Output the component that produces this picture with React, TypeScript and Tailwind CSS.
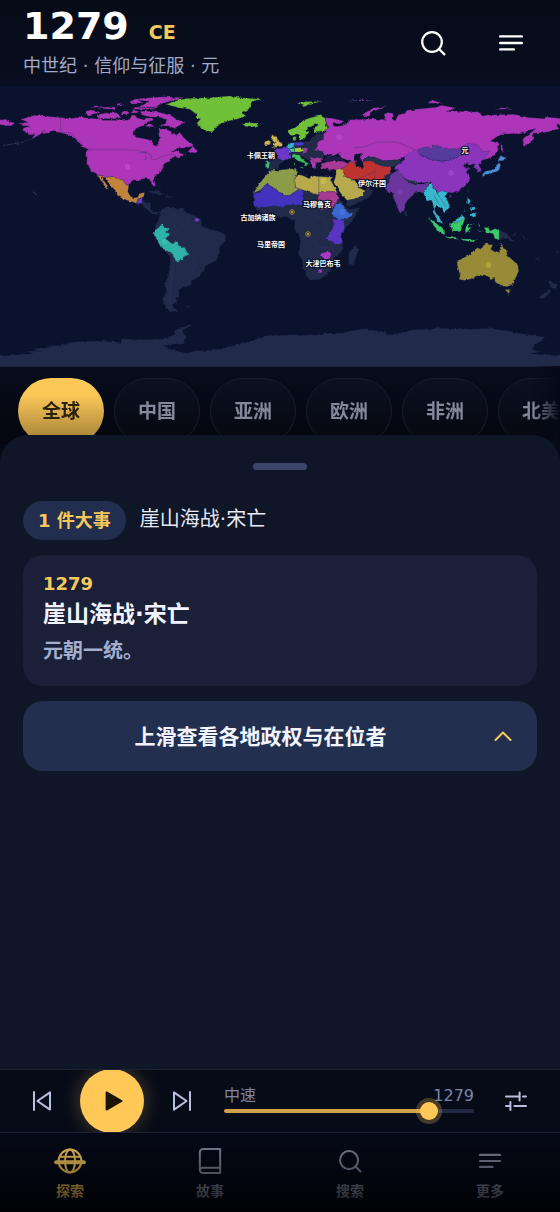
import { useState } from "react";
import { clsx } from "clsx";

type Land = { fill: string; d: string };

const DARK = "#232c49";
const PINK = "#ad34b7";
const GREEN = "#70c137";

// Paths are written in degrees (lon lat), the map group flips and scales them.
const lands: Land[] = [
  // Antarctica
  { fill: DARK, d: "M-184 -84 -164 -82.6 -158 -82 -162 -80.5 -154 -80.3 -158 -79 -148 -78.3 -150 -77.4 -142 -77 -135 -75 -125 -74.2 -115 -74 -102 -75 -102 -72.6 -85 -73.2 -75 -73 -68 -70 -67 -67 -62 -65 -57 -63 -57 -64 -63 -67 -61 -71 -62 -75 -75 -77 -72 -79 -60 -82 -55 -80.5 -45 -80 -40 -79 -35 -78.5 -28 -76.2 -20 -74.5 -14 -72.5 -8 -70.5 8 -70 22 -70.4 32 -69 40 -69 45 -67.6 55 -66 62 -67.5 68 -68 69 -71 72 -69.5 78 -69 85 -66.8 96 -66.6 102 -65.8 112 -66.2 122 -66.4 135 -66 145 -67.3 156 -69.5 170 -71.6 168 -74 163 -76.5 162 -79 166 -81 160 -82.2 184 -84 184 -94 -184 -94z" },
  // Americas
  { fill: PINK, d: "M-168 65.6 -164 66.5 -162 66.5 -166 68.5 -162 70 -157 71.3 -150 70.5 -141 69.7 -135 69 -128 70.2 -124 69.5 -118 69 -114 68 -108 68 -102 67.8 -97 68.2 -95 71.5 -92 71 -92 69.5 -88 68.5 -86 69.5 -82 69.5 -81.5 68 -86 66.5 -87 64.8 -92 63 -94.5 60.5 -94.5 58.8 -92.5 57 -88 56.3 -82.3 55.2 -82 53 -80 51.3 -79 52 -78.8 54.5 -76.7 57 -78 58.8 -77.5 61 -78 62.4 -74 62.3 -70 61 -69.5 59 -66 58.8 -64.5 60.3 -62 57 -60 55.2 -56 52.5 -56 51.5 -60 50.2 -66 50 -70 47 -65 49.2 -64.5 47 -61 45.7 -65.5 43.5 -66.5 45 -70 43.7 -70.7 42 -70 41.7 -74 40.6 -75.5 38 -76 36.8 -75.6 35.3 -78 33.9 -81 32 -81.3 30 -80 27 -80.4 25.2 -81.8 26 -82.7 28 -84 30 -86 30.3 -89.5 30.2 -89.2 29.2 -91.5 29.5 -94 29.6 -97 27.8 -97.2 26 -99.2 26.5 -101 29.7 -103 29 -104.6 29.7 -106.5 31.8 -111 31.3 -114.8 32.5 -117.1 32.5 -118.5 34 -120.6 34.6 -122.4 37.5 -124.3 40.3 -124 44 -124.6 48.3 -122.8 49 -127 51 -130 54.5 -133 57.5 -137 58.8 -141 60 -146 60.8 -149 60 -152 59.2 -153 61 -150.5 61.2 -154 59 -158 56.8 -163 54.8 -165 54.4 -160 56 -157.5 58.6 -162 58.7 -162 60 -165.5 61.5 -165 63 -161 64.3 -166 64.5z" },
  { fill: PINK, d: "M-90 73.7 -86 73.8 -80 73.7 -76 72.7 -70 71 -67 69 -61.5 66.6 -64 65 -67.5 63 -65.5 62 -72 64.3 -78 64.5 -73.5 66 -73 68.3 -78 70 -84 70 -89 71.5zM-117 69 -105 69 -102 70 -105 72.8 -110 73 -118 71.5zM-125.5 72 -123 71.2 -116 73 -121 74.5 -124.5 74zM-91 76.5 -80 76.2 -78 77.8 -73 79.5 -62 82.4 -75 83.1 -90 82 -92 81 -84 80 -88 78zM-95 75 -80 75 -81 75.7 -92 76.5zM-96 79 -88 79 -92 81.3 -97 80zM-117 75.5 -106 75 -106 76.5 -115 76.3zM-102 72 -97 72 -98 74 -102 73.5zM-95.5 72.5 -90 73 -92 74.1 -95 74zM-87 64 -80 63.7 -84 65.8zM-59.3 47.7 -53 46.7 -53.5 48.5 -56 51.5 -58 49zM-122 76 -116 76.5 -118 77.4zM-105 77.5 -100 78 -104 79zM-184 69 -175 67.5 -170 66 -173 64.3 -184 65.5z" },
  { fill: "#c2843b", d: "M-117.1 32.5 -114.8 32.5 -111 31.3 -106.5 31.8 -104.6 29.7 -101 29.7 -99 26.5 -97.2 26 -97.8 22 -96 19 -94 18.2 -91.5 18.5 -90.3 21 -87 21.5 -88 18.3 -91 17.5 -92.3 14.6 -96 15.8 -101.5 17.7 -105.5 20.3 -105.5 22.5 -109 26 -112.8 31 -114.8 31.7 -111 26 -109.5 23 -112 24.7 -114.5 28z" },
  { fill: DARK, d: "M-90 13.9 -88.5 15.8 -83.3 15 -83.6 11 -81 9 -77.4 8.6 -79 7.5 -83 8.3 -86 11.5zM-84.8 22 -80 23 -74.3 20.3 -77.5 20zM-74 18.4 -72.5 19.8 -68.5 18.6zM-78 26 -77 24.5 -76.5 25z" },
  { fill: "#6340c4", d: "M-91 17.5 -88.5 18.2 -88.5 15.8 -90 13.9 -92.3 14.6z" },
  { fill: DARK, d: "M-77.4 8.6 -75 11 -71.7 12.4 -70 11.5 -62 10.7 -60 8.5 -54 6 -51 4.5 -50 0 -44 -2.8 -39 -3.5 -35 -6 -35 -9 -39 -13.5 -39.2 -18 -41 -22 -48 -25.5 -49 -29 -53 -33.5 -57 -35 -57 -38 -62 -39 -65 -41 -65 -45 -67.5 -46.5 -66 -48 -69 -51 -68.5 -52.5 -65.3 -54.8 -70 -55 -74.5 -51 -75.5 -47 -73 -42 -73.5 -37 -71.5 -31 -70.3 -20 -76 -14 -81 -6 -80 -2.5 -80 1 -77.5 4z" },
  { fill: "#2fb2a6", d: "M-81 -5 -80.5 -2.5 -78 -1 -76 1.5 -74.5 -0.5 -71 -2 -73 -4 -70.5 -5 -73.5 -8 -70 -11 -67 -10 -65 -12.5 -61 -14 -60.5 -16.5 -58 -18 -62 -20 -63 -22 -67 -22.8 -69 -18 -76.5 -14z" },
  { fill: "#7a3fc8", d: "M-54.5 5.5 -51.5 4.2 -53 2.5 -54.5 3z" },
  { fill: DARK, d: "M-61 -51.7 -58 -51.4 -58.5 -52.2z" },
  { fill: GREEN, d: "M-73 78.2 -66 76 -58 75 -54 72 -54 69.5 -51 69 -53.5 66 -51 63.5 -48 61 -44 59.8 -42 62 -40 65 -33 67.5 -24 69.8 -22 71 -25 73 -20 75 -19 78 -18 80 -12 81.5 -25 82.5 -33 83.6 -45 82.5 -60 82 -67 80.5zM-24.3 65.5 -22 64 -19 63.4 -14 64.5 -15 66.2 -22 66.4z" },
  // Europe
  { fill: DARK, d: "M8 54 14 54 19 54.5 21 57 24 59.4 28 59.4 31 56 34 52 30 46 28 45.2 28 43.7 26 41 23 40.5 23 37 21.5 37.5 19.5 41.5 14 45.3 12.3 45 8 44 6.5 46.5 4 50 5 53.3z" },
  { fill: DARK, d: "M-9.2 43.2 -1.7 43.4 3.2 42.3 -0.3 39.5 -2 36.8 -5.5 36 -9 37z" },
  { fill: "#33c279", d: "M-8.8 41.8 -6.5 41.8 -7 38 -7.5 37.1 -9 37 -9.4 38.8z" },
  { fill: "#6d38ca", d: "M-4.5 48.4 -1.3 46 -1.7 43.4 3 42.4 7.4 43.7 6.5 46.5 8 48.9 2.5 51 1.5 50 -1.5 49.6z" },
  { fill: "#d0b84c", d: "M-5.5 50.1 1.3 51.2 1.7 52.7 -1.5 55 -2 57.5 -4 57.6 -3.2 58.6 -5 58.6 -6 56.5 -4.8 54.8 -3 54 -4.5 53.2 -4.8 52 -3 51.4zM-10 52 -6.4 52.3 -6 54.5 -8 55.2 -10 54z" },
  { fill: GREEN, d: "M5 61.5 5.5 58.8 8 58 10.5 59.2 11.3 59 12.8 55.5 14.3 55.6 16.5 57 17 58.7 18.8 60 17.2 61 18 63 21.5 64.5 22.2 65.8 25.2 65.2 21.5 63 21.3 60.9 23 59.9 28 60.5 31 62.5 30 64.5 29.5 67 29 69.5 26 71 20 69.8 15 68 12 65 10 63.5zM8.2 57 8.3 55 10 55 10.5 57.5zM11 79 16 76.8 19 78.5 27 80 18 80z" },
  { fill: "#35b8c4", d: "M4 51 7 53.4 9.5 53.5 9 51 6 49.5z" },
  { fill: "#4d38d6", d: "M9.5 53.5 14 54 16 52.5 12 51.5 9 52z" },
  { fill: "#9fd13a", d: "M9 50 13 50.5 16 48.6 13 47.5 9.5 47.6z" },
  { fill: "#38cfa0", d: "M6 49.5 9 50 9.5 47.6 7 47.5z" },
  { fill: "#b03cb4", d: "M13 51 18 50 17 47.3 14 46.5 16 48.6zM19.5 44 22.5 44 23 40.5 23 37 21.5 37.5 19.5 41.5z" },
  { fill: "#3fc35c", d: "M7.5 44 8 46 12.3 45.7 13.5 43.6 18.3 40 16.5 38.3 15.8 40 12 42 9.5 44zM12.5 38 15.5 38 15 36.8zM8.5 41 9.7 41 9.5 39z" },
  { fill: "#a93897", d: "M26.3 40 30 41.2 35 42 41.5 41.4 44.5 39.8 44 37.3 36 36 30.5 36.5 27 37zM20 43 24 43.8 28 43.5 26 41 22 40.6z" },
  // Asia
  { fill: PINK, d: "M28 59.8 30 60 28.5 61.5 31 63 29.5 67 29 69.6 33 69.4 41 67.5 40 66 35 66.5 34.5 64.5 37.5 63.9 40 64.6 44 66 44 68.3 54 68.4 60 69 68 68.5 67 71 69 72.9 73 72.5 72 69 74 67.5 76 71.5 80.5 72.5 81 73.6 87 75 100 76.3 104 77.6 113 75.8 107 73.5 113 73.7 127 73.4 131 71 139 71.5 150 71.8 160 69.7 170 69 171 70 184 68.9 184 65 177.5 64.7 179.5 62.5 170 60 163.5 59.8 162 58 163.3 56 160 53.3 156.8 51 156 56 161 60 164.5 62.5 160 61.5 155 59.3 142 59.2 135.5 54.7 141 53 140 48 135 43.5 131 42.6 120 44 87 46 80 45 75 42.5 70 42 66 42 61 44 56 45 53 42 51 44.5 53 46.8 48 46 47.5 43 49 41.5 46.5 41 40 43.5 37 46.8 39 47.2 34 45 32.5 46.2 29 45.4 27 48 22 48.5 24 51 24 54 28 56zM52 71 57 70.6 58 73 68 76.8 60 75.8zM95 79 105 78.5 98 81zM138 75 150 75 143 76zM142 54 143.5 50 142.5 46.3 142 50zM45 80.3 60 80.5 52 81.2z" },
  { fill: "#27304c", d: "M53 42 56 45 61 44 66 42 70 42 75 42.5 80 42.5 74 38.5 66 36.5 58 38z" },
  { fill: "#b7aa4d", d: "M34.5 28 36 33 36 36.5 42 37 41 34.5 42 32 46 29.5 48 29.5 50 26.5 51.6 24.2 55 22.5 52 19 47 17 43 16.5 39 21z" },
  { fill: DARK, d: "M43 16.5 47 17 52 19 55 22.5 56 26 59.8 22.5 57 18.5 52 15.5 45 12.8 43.3 12.8zM61.5 25.2 66 30 70.5 34 74.5 33 70 28 67 25z" },
  { fill: "#bf3131", d: "M39 37.5 42 38.5 44.5 41 48.5 41.5 49 38 54 37 53 41.5 58 42 66 38.5 71 38 70.5 34 66 30 61.5 25.2 57 26.8 52 27.5 50 30 48 30 46 29.5 42 32 41 34.5z" },
  { fill: "#6a369d", d: "M68 23.7 67 25 70 28 71 33 75 35.5 78 35 79 31.5 81 30.2 88 27 92 27 96.5 28.5 94 24 92.3 21 90 22 87 21.3 82 16.6 80.2 13.5 80 10.3 77.5 8 76 10.5 74.5 14 72.8 19 72.5 21.3 70 21z" },
  { fill: "#8b35bd", d: "M75 39 80 42.5 80 45 87 49 91 45 97 42.7 105 41.7 112 43.6 119.5 46.7 116 49.8 120 53 126 52.5 131 47.8 135 48.3 131 42.8 130 42.4 129.7 41 127.5 39.6 129.4 36.5 129 35 126.4 34.5 126.8 37 125 38 124.5 40 121.5 39 121 40.8 118 39 119 37.2 122.5 37.2 119.3 35 122 31.5 121.8 29 119 25.5 115 22.7 110.5 21.2 108 21.7 102 21.5 98.5 25 97 28.5 92 27.8 88.8 27.8 84 28.8 81 30.3 78.7 32 76 35.5 73 37zM108.7 19.5 110.8 20 109.5 18.2z" },
  { fill: "#573a9c", d: "M88 49 93 50.7 98 50.5 98 52 102 51.5 108 49.5 116 49.8 119.5 46.7 112 43.6 105 41.7 97 42.7 91 45z" },
  { fill: DARK, d: "M80 30.3 88 27.9 88 26.7 84 27.2zM80 9.5 81.8 7.5 80.5 6zM120.3 23 121.8 25 120.9 22z" },
  { fill: "#37b8cc", d: "M92.3 21 94.5 25 97.5 28 98.5 25 101.5 21.5 104 22.6 108 21.6 106 19 109 14 108.8 11.5 105 8.7 104.8 10.4 102.5 12 100.8 13.5 99.3 11 100.3 8 102.5 6 104 1.4 101 3 100 6.5 98.3 8.5 98.7 12 97.5 16.5 94.3 16zM120.5 18.5 122 18 121.5 14.5 124 13 120.5 14.5zM122 7 124 8.5 126.5 8 125.5 9.7 126 6 124 6zM122 11.5 125 12.5 125 10 123 9.5zM117.3 8.5 119.3 11 118.5 10.5z" },
  { fill: "#4a8fd6", d: "M130.5 31.3 132 33 135.5 33.6 139 34.9 140.8 35.8 141.9 39.6 141.2 41.3 140 40 138.5 37.3 136 36 132 35.2 130 33.3zM140 42 143.3 42 145.4 43.5 141.8 45.4z" },
  { fill: "#39cb68", d: "M109.3 1.8 111 1.6 115 5 117 7 119 5 117.5 1 116 -3.8 111 -3.2 110 -1zM95.3 5.5 98 4 103.5 -1 106 -3.2 105.8 -5.8 102.5 -4 99 0zM105.2 -6.7 110.5 -6.6 114.5 -7.7 114.3 -8.6 108 -7.7zM119.5 -5.5 119 -2 120 1 125 1.5 121 .3 121 -1 123.3 -1 121.7 -2.2 122.7 -4.6 121 -3zM131 -1 134 -1 135 -3.2 138 -1.7 141 -2.6 141 -9 138 -8 137 -5 133 -4zM116 -8.3 122 -8.4 127 -8.5 123.5 -10.2 119 -9.5zM127.5 2 128.5 .5 128 -.8zM126.5 -3.2 130.5 -3.3 128 -3.7z" },
  { fill: "#43b7c9", d: "M110.5 1.7 115 5 117 7 119 5 117 4.2 115 2.5z" },
  { fill: DARK, d: "M141 -2.6 146 -5 147.5 -7 150.7 -10.5 144 -7.7 141 -9zM149 -5.5 152 -4 151 -6zM155 -6 160 -9 157 -8zM164 -20.3 167 -22.2 165 -21.8zM172.8 -34.5 175.5 -36.8 178.4 -37.8 176 -41 174 -39.5zM172.7 -40.6 174.3 -41.8 170.5 -45.8 168.5 -46.6 166.5 -46z" },
  { fill: "#978b37", d: "M113.7 -22.5 114.2 -26.3 115.8 -32 115 -34.3 118 -35 123.5 -33.9 126 -32.3 131.5 -31.5 134 -32.7 135.5 -34.8 138 -33 138 -35.5 140 -37.5 143.5 -38.8 146.3 -39 150 -37.4 151.5 -33.3 153.5 -29 153 -25.3 149.5 -21.8 146.3 -19 145.3 -15 143.6 -14.3 142.5 -10.8 141.6 -13.5 140.8 -17.5 138.5 -16.7 135.5 -15 136.8 -12.2 132.6 -11.4 130.7 -12.6 129.5 -15 126.8 -14 124 -16.4 122.2 -18 119 -20zM144.7 -40.8 148.3 -40.9 147 -43.6z" },
  // Africa
  { fill: DARK, d: "M-17 21 -17.3 14.7 -16.7 12.4 -13 9 -8 4.4 -4 5.2 2 6.2 5 6 6.5 4.3 9.5 4 9.5 0 8.8 -1 12 -5 13.5 -9 12.5 -14 11.8 -17.5 14.5 -22.5 15 -27 18 -32.8 18.5 -34.3 20 -34.8 25.7 -34 30 -31.2 32.8 -27.5 32.7 -26 35.3 -24 35 -20 40.5 -15.5 40.4 -10.5 39 -6.5 41.5 -2 47 4 51.3 11.8 44 10.5 43 12 39.5 15.3 37.2 19.5 35.5 24 32.5 30 34.2 31.3 30 31.5 25 31.8 20 31 19 30.3 15 32.3 11 33.3 10.3 37.2 0 36 -6 35.8 -9.8 31.5 -13 27.7zM49.3 -12 50.3 -15.7 47 -25 44 -24.5 44.3 -17z" },
  { fill: "#8a9c46", d: "M-6 35.8 0 36 10.3 37.2 11 33.3 9.5 30 10 25 12 23.5 6 19.5 3 19.5 -5 25 -8.7 27 -12 23.5 -17 21 -13 27.7 -9.8 31.5z" },
  { fill: "#b8a94c", d: "M10 25 9.5 30 11.5 33.2 15 32.3 19 30.3 20 32.5 25 31.8 34.2 31.3 32.5 30 35.5 24 36.8 22 25 22 25 20 15 23 12 23.5z" },
  { fill: "#4331bd", d: "M-17 21 -13 21.3 -12 23.5 -8.7 27 -5 25 3 19.5 6 19.5 12 23.5 15 23 15 17 13 13.5 4 13.5 2 12 -4 13 -10 12 -16.8 12.5z" },
  { fill: "#a73a92", d: "M25 22 36.8 22 37.5 18 36 14.5 34 12 28 10.5 25 11 24 15z" },
  { fill: "#3b66cf", d: "M36 14.5 38 15 42 12 43 9 47.5 8 43 4.5 38 4 35 6 33 8z" },
  { fill: "#5836c3", d: "M34 4.5 41 3.5 41.5 -2 39 -6.5 40.4 -10.5 36 -11.5 30 -8 34 -1z" },
  { fill: "#ab38c4", d: "M26 -18 31 -15.7 33 -18 32 -21 29 -22zM24.5 -28 27 -28 27 -30 24.5 -30z" },
];

// Borders and inland water drawn as hairlines
const borders =
  "M-141 69.7V60M-123 49H-95L-89 48 -83 46 -82.5 42.5 -79 43 -75 45 -70 46 -67 45M-130 55 -135 60 -141 60M-8.7 27 3 19.5 6 19.5M25 31.8V22M10 25 15 23M-58 6 -60 1 -68 -4 -70 -11M-58 -18 -54 -25 -57 -30M-68 -22 -70 -35 -71 -50M15 13 18 8 28 5 30 -2M12 -6 22 -8 24 -14 33 -14M20 -18V-28M33 -10 34 -16M47 50 55 51 62 54 75 54 82 51 87 49M50 30 61 35M61 25 61 37M99 20 102 14M101 21 107 12";

const markers = [
  { lon: -98, lat: 38, fill: "#d45fd0" },
  { lon: 28, lat: 29, fill: "#dcd04f" },
  { lon: 38, lat: 57, fill: "#c659cf" },
  { lon: 110, lat: 34, fill: "#a85bd6" },
  { lon: 77, lat: 22, fill: "#7c4ab4" },
  { lon: 134, lat: -25, fill: "#d0c040" },
  { lon: -74, lat: -10, fill: "#4fd0c0" },
  { lon: 40, lat: 9, fill: "#5b86e0" },
];

const rings = [
  { x: 292, y: 126 },
  { x: 308, y: 148 },
];

const labels = [
  { name: "卡佩王朝", x: 261, y: 72 },
  { name: "古加纳诸族", x: 258, y: 134 },
  { name: "马穆鲁克", x: 317, y: 121 },
  { name: "伊尔汗国", x: 372, y: 100 },
  { name: "元", x: 465, y: 67 },
  { name: "马里帝国", x: 271, y: 161 },
  { name: "大津巴布韦", x: 323, y: 180 },
];

const WorldMap = () => (
  <svg viewBox="0 0 560 280" className="block w-full bg-[#0b122e]" role="img" aria-label="1279">
    <defs>
      {/* Roughens the coastlines */}
      <filter id="coast" x="0" y="0" width="560" height="280" filterUnits="userSpaceOnUse">
        <feTurbulence type="fractalNoise" baseFrequency="0.25" numOctaves="2" seed="4" result="noise" />
        <feDisplacementMap in="SourceGraphic" in2="noise" scale="3" xChannelSelector="R" yChannelSelector="G" />
      </filter>
    </defs>
    <g filter="url(#coast)">
      <g transform="matrix(1.5556 0 0 -1.5556 280 140)">
        {lands.map((land, i) => (
          <path key={i} d={land.d} fill={land.fill} stroke="#1d2750" strokeWidth="0.2" strokeLinejoin="round" />
        ))}
        <path d="M-165 54 -170 53 -178 51.8M-159 22 -156 20M178 -17 179 -16" fill="none" stroke="#343a63" strokeWidth="0.6" />
      </g>
    </g>
    <g transform="matrix(1.5556 0 0 -1.5556 280 140)">
      <path d={borders} fill="none" stroke="#39346f" strokeWidth="0.4" opacity="0.6" />
      {/* Great lakes, Black sea */}
      <path d="M-92 47 -86 48 -85 46.6zM-87.5 42 -86.5 45.5 -85.5 43zM28 42 31 46 34 44.6 38 44.5 41 42 35 42.2 30 41.4z" fill="#3a2f72" opacity="0.4" />
      {markers.map((m) => (
        <circle key={m.lon} cx={m.lon} cy={m.lat} r="1.8" fill={m.fill} opacity="0.45" />
      ))}
    </g>
    {rings.map((r) => (
      <g key={r.x}>
        <circle cx={r.x} cy={r.y} r="2.3" fill="#3a3a3c" stroke="#a89138" strokeWidth="0.8" />
        <circle cx={r.x} cy={r.y} r="1" fill="#d9a63a" />
      </g>
    ))}
    {labels.map((l) => (
      <text
        key={l.name}
        x={l.x}
        y={l.y}
        textAnchor="middle"
        className="fill-white stroke-[#0a0f22] stroke-2 text-[7px] font-bold [paint-order:stroke]"
      >
        {l.name}
      </text>
    ))}
  </svg>
);

type IconProps = { className?: string };

const SearchIcon = ({ className }: IconProps) => (
  <svg viewBox="0 0 26 26" className={className} fill="none" stroke="currentColor" strokeWidth="2.2" strokeLinecap="round">
    <circle cx="12" cy="12" r="9.8" />
    <path d="M19 19l5.4 5.4" />
  </svg>
);

const MenuIcon = ({ className }: IconProps) => (
  <svg viewBox="0 0 26 26" className={className} fill="none" stroke="currentColor" strokeWidth="2.4" strokeLinecap="round">
    <path d="M2.2 6.4h21.6M2.2 13h21.6M2.2 19.4h13.6" />
  </svg>
);

const GlobeIcon = ({ className }: IconProps) => (
  <svg viewBox="0 0 32 26" className={className} fill="none" stroke="currentColor" strokeWidth="2">
    <circle cx="16" cy="13" r="11.4" />
    <ellipse cx="16" cy="13" rx="5" ry="11.4" />
    <path d="M5.5 8.8h21" />
    <path d="M2.2 14.2h27.6" strokeWidth="4" strokeLinecap="round" />
  </svg>
);

const BookIcon = ({ className }: IconProps) => (
  <svg viewBox="0 0 26 30" className={className} fill="none" stroke="currentColor" strokeWidth="2.2" strokeLinejoin="round">
    <path d="M5.5 2H24v26H5.5A3.5 3.5 0 0 1 2 24.5v-19A3.5 3.5 0 0 1 5.5 2z" />
    <path d="M2 24.6c.4-1.6 1.6-2.4 3.5-2.4H24" />
  </svg>
);

const SkipIcon = ({ className }: IconProps) => (
  <svg viewBox="0 0 20 22" className={className} fill="none" stroke="currentColor" strokeWidth="2" strokeLinecap="round" strokeLinejoin="round">
    <path d="M2 2v18M18 2.4v17.2L5.4 11z" />
  </svg>
);

const TuneIcon = ({ className }: IconProps) => (
  <svg viewBox="0 0 24 22" className={className} fill="none" stroke="currentColor" strokeWidth="2" strokeLinecap="round">
    <path d="M2 6.6h13.4M19 6.6h3M15.6 2.6v8M2 16h3M10.4 16H22M6.4 12v8" />
  </svg>
);

const regions = ["全球", "中国", "亚洲", "欧洲", "非洲", "北美"];

const tabs = [
  { label: "探索", icon: <GlobeIcon className="h-[26px] w-8" /> },
  { label: "故事", icon: <BookIcon className="h-7 w-6" /> },
  { label: "搜索", icon: <SearchIcon className="size-6" /> },
  { label: "更多", icon: <MenuIcon className="size-6" /> },
];

const MIN_YEAR = -2800;
const MAX_YEAR = 2026;

const App = () => {
  const [region, setRegion] = useState("全球");
  const [tab, setTab] = useState("探索");
  const [year, setYear] = useState(1279);
  const progress = ((year - MIN_YEAR) / (MAX_YEAR - MIN_YEAR)) * 100;

  return (
    <div className="flex min-h-screen flex-col overflow-hidden bg-[#060a17] font-['DejaVu_Sans','Noto_Sans_CJK_SC',sans-serif] text-white">
      <header className="flex h-[86px] items-center justify-between bg-linear-to-b from-[#060b17] to-[#090e20] px-[23px]">
        <div>
          <h1 className="flex items-baseline gap-5 text-[38px] leading-11 font-bold">
            1279 <span className="text-[19px] leading-6 text-[#f7c95c]">CE</span>
          </h1>
          <p className="mt-0.5 text-lg leading-8 text-[#a3a9c9]">中世纪 · 信仰与征服 · 元</p>
        </div>
        <div className="flex gap-[26px]">
          <button type="button" aria-label="搜索" className="grid size-[52px] place-items-center">
            <SearchIcon className="size-[26px]" />
          </button>
          <button type="button" aria-label="更多" className="grid size-[52px] place-items-center">
            <MenuIcon className="size-[26px]" />
          </button>
        </div>
      </header>

      <WorldMap />

      <div className="flex gap-2.5 overflow-hidden border-t border-[#1c2440] bg-linear-to-b from-[#080d1c] to-[#04060e] mask-r-from-95% pt-[11px] pl-[18px]">
        {regions.map((name) => (
          <button
            key={name}
            type="button"
            onClick={() => setRegion(name)}
            className={clsx(
              "h-[66px] shrink-0 rounded-full border px-[23px] text-[19px] font-bold",
              region === name
                ? "border-transparent bg-linear-to-b from-[#fbc858] from-25% to-[#a07c36] bg-origin-border text-[#2b2008]"
                : "border-[#171d2e] bg-linear-to-b from-[#0b1122] to-[#06080f] text-[#83889b]",
            )}
          >
            {name}
          </button>
        ))}
      </div>

      <main className="relative -mt-[9px] flex-1 rounded-t-[28px] bg-linear-to-b from-[#0f1627] to-[#101728] px-[23px] pt-7">
        <div className="mx-auto h-[7px] w-[54px] rounded-full bg-[#3c4669]" />
        <div className="mt-[31px] flex items-center gap-3.5">
          <span className="rounded-full bg-[#212e4d] px-[15px] text-lg leading-[39px] font-bold text-[#f7c95c]">1 件大事</span>
          <p className="pb-1 text-xl text-[#e6eaf8]">崖山海战·宋亡</p>
        </div>
        <article className="mt-[15px] rounded-[20px] bg-[#192038] px-5 pt-[17px] pb-4">
          <time className="block text-lg leading-6 font-bold text-[#f7c95c]">1279</time>
          <h2 className="text-[23px] leading-9 font-bold text-[#f2f5ff]">崖山海战·宋亡</h2>
          <p className="text-xl leading-[38px] font-bold text-[#a3aecf]">元朝一统。</p>
        </article>
        <button type="button" className="mt-[15px] flex h-[70px] w-full items-center rounded-[20px] bg-[#222f4e] pr-[25px] pl-1">
          <span className="flex-1 pt-1 text-[21px] font-bold text-[#f2f5ff]">上滑查看各地政权与在位者</span>
          <svg viewBox="0 0 18 12" className="h-3 w-[18px]" fill="none" stroke="#f7c95c" strokeWidth="2" strokeLinecap="round" strokeLinejoin="round">
            <path d="M1.5 10L9 2.5l7.5 7.5" />
          </svg>
        </button>
      </main>

      <section className="flex h-16 items-center overflow-hidden border-y border-[#1b2133] bg-[#060b18] px-8 text-[#b9c1de]">
        <button type="button" aria-label="上一个" className="grid w-5 place-items-center">
          <SkipIcon className="h-[22px] w-5" />
        </button>
        <button
          type="button"
          aria-label="播放"
          className="mx-7 grid size-16 shrink-0 place-items-center rounded-full bg-[#ffc857] shadow-[0_0_20px_rgba(255,200,87,0.3)]"
        >
          <svg viewBox="0 0 18 20" className="ml-1 h-5 w-[18px] fill-[#1a1404]">
            <path d="M.6 1.4C.6.5 1.4.2 2.1.6l14.9 8.6c.7.4.7 1.2 0 1.6L2.1 19.4C1.4 19.8.6 19.5.6 18.6z" />
          </svg>
        </button>
        <button type="button" aria-label="下一个" className="grid w-5 place-items-center">
          <SkipIcon className="h-[22px] w-5 rotate-180" />
        </button>
        <div className="mr-[30px] ml-8 flex-1">
          <label htmlFor="year" className="flex justify-between pt-0.5 text-base leading-5 text-[#7e86a3]">
            <span>中速</span>
            <span>{year}</span>
          </label>
          <input
            id="year"
            type="range"
            min={MIN_YEAR}
            max={MAX_YEAR}
            value={year}
            onChange={(e) => setYear(Number(e.target.value))}
            style={{ backgroundImage: `linear-gradient(to right, #d0a04b ${progress}%, #212a42 ${progress}%)` }}
            className="mt-[3px] mb-[5px] block h-1 w-full appearance-none rounded-full [&::-webkit-slider-thumb]:size-[18px] [&::-webkit-slider-thumb]:appearance-none [&::-webkit-slider-thumb]:rounded-full [&::-webkit-slider-thumb]:bg-[#ffc857] [&::-webkit-slider-thumb]:shadow-[0_0_0_4px_rgba(255,200,87,0.25)]"
          />
        </div>
        <button type="button" aria-label="设置" className="grid w-6 place-items-center">
          <TuneIcon className="h-[22px] w-6" />
        </button>
      </section>

      <nav className="relative grid h-[79px] grid-cols-4 bg-[#050917] after:pointer-events-none after:absolute after:inset-0 after:bg-linear-to-b after:from-transparent after:to-black/80">
        {tabs.map(({ label, icon }) => (
          <button
            key={label}
            type="button"
            onClick={() => setTab(label)}
            className={clsx(
              "flex flex-col items-center pt-[13px] text-sm leading-5 font-bold",
              tab === label ? "text-[#f7c95c]" : "text-[#80869c]",
            )}
          >
            <span className="grid h-[30px] place-items-center">{icon}</span>
            <span className="mt-[5px]">{label}</span>
          </button>
        ))}
      </nav>
    </div>
  );
};

export default App;
